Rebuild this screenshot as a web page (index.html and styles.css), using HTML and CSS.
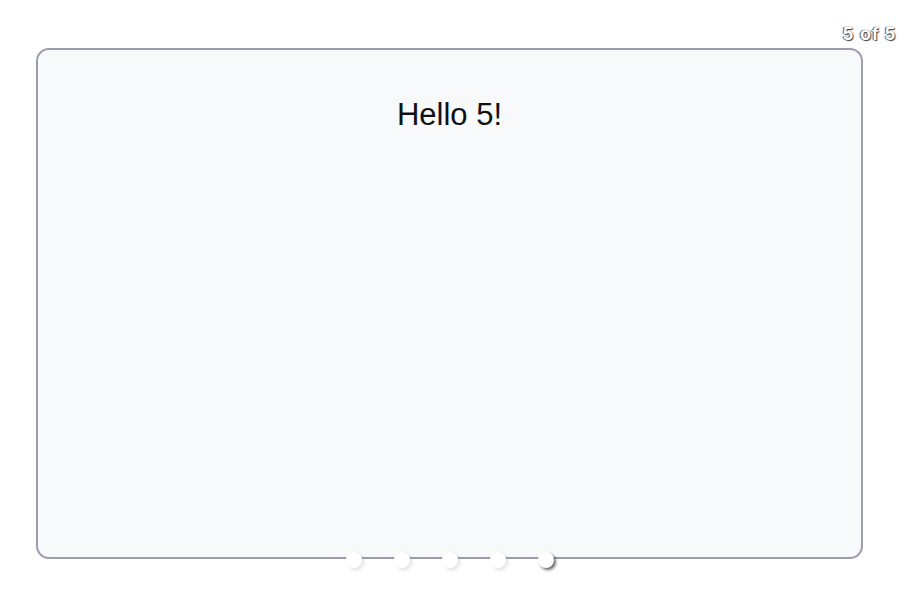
FILE: index.html
```html
<!DOCTYPE html>
<html>
<head>
<meta charset="utf-8">
<link rel="stylesheet" href="styles.css">
</head>
<body>
<div class="slider">
  <div class="counter">5 of 5</div>
  <div class="card">
    <div class="slide">Hello 5!</div>
    <div class="dots">
      <span class="dot"></span>
      <span class="dot"></span>
      <span class="dot"></span>
      <span class="dot"></span>
      <span class="dot active"></span>
    </div>
  </div>
</div>
</body>
</html>
```
FILE: styles.css
```css
html, body {
  margin: 0;
  padding: 0;
  background: #ffffff;
}
body {
  font-family: "Liberation Sans", Arial, sans-serif;
  width: 912px;
  height: 612px;
  overflow: hidden;
}
.slider {
  padding: 24px 16px 0 36px;
  display: flex;
  flex-direction: column;
  gap: 4px;
}
.counter {
  align-self: flex-end;
  font-size: 18px;
  line-height: 20px;
  font-weight: bold;
  color: #ffffff;
  letter-spacing: 1px;
  text-shadow: 0 0 1px #333, 1px 1px 1px #444, -1px 0 1px #666;
}
.card {
  position: relative;
  box-sizing: border-box;
  width: 827px;
  height: 511px;
  border: 2px solid #9c9eac;
  border-radius: 13px;
  background: #f8f9fb;
}
.slide {
  padding-top: 47px;
  text-align: center;
  font-size: 31px;
  color: #111;
}
.dots {
  position: absolute;
  left: 0;
  right: 0;
  bottom: -11px;
  display: flex;
  justify-content: center;
  gap: 32px;
}
.dot {
  width: 16px;
  height: 16px;
  border-radius: 50%;
  background: #ffffff;
  box-shadow: 2px 2px 4px rgba(0, 0, 0, 0.12);
}
.dot.active {
  box-shadow: 2px 2px 3px rgba(0, 0, 0, 0.6);
}
```
